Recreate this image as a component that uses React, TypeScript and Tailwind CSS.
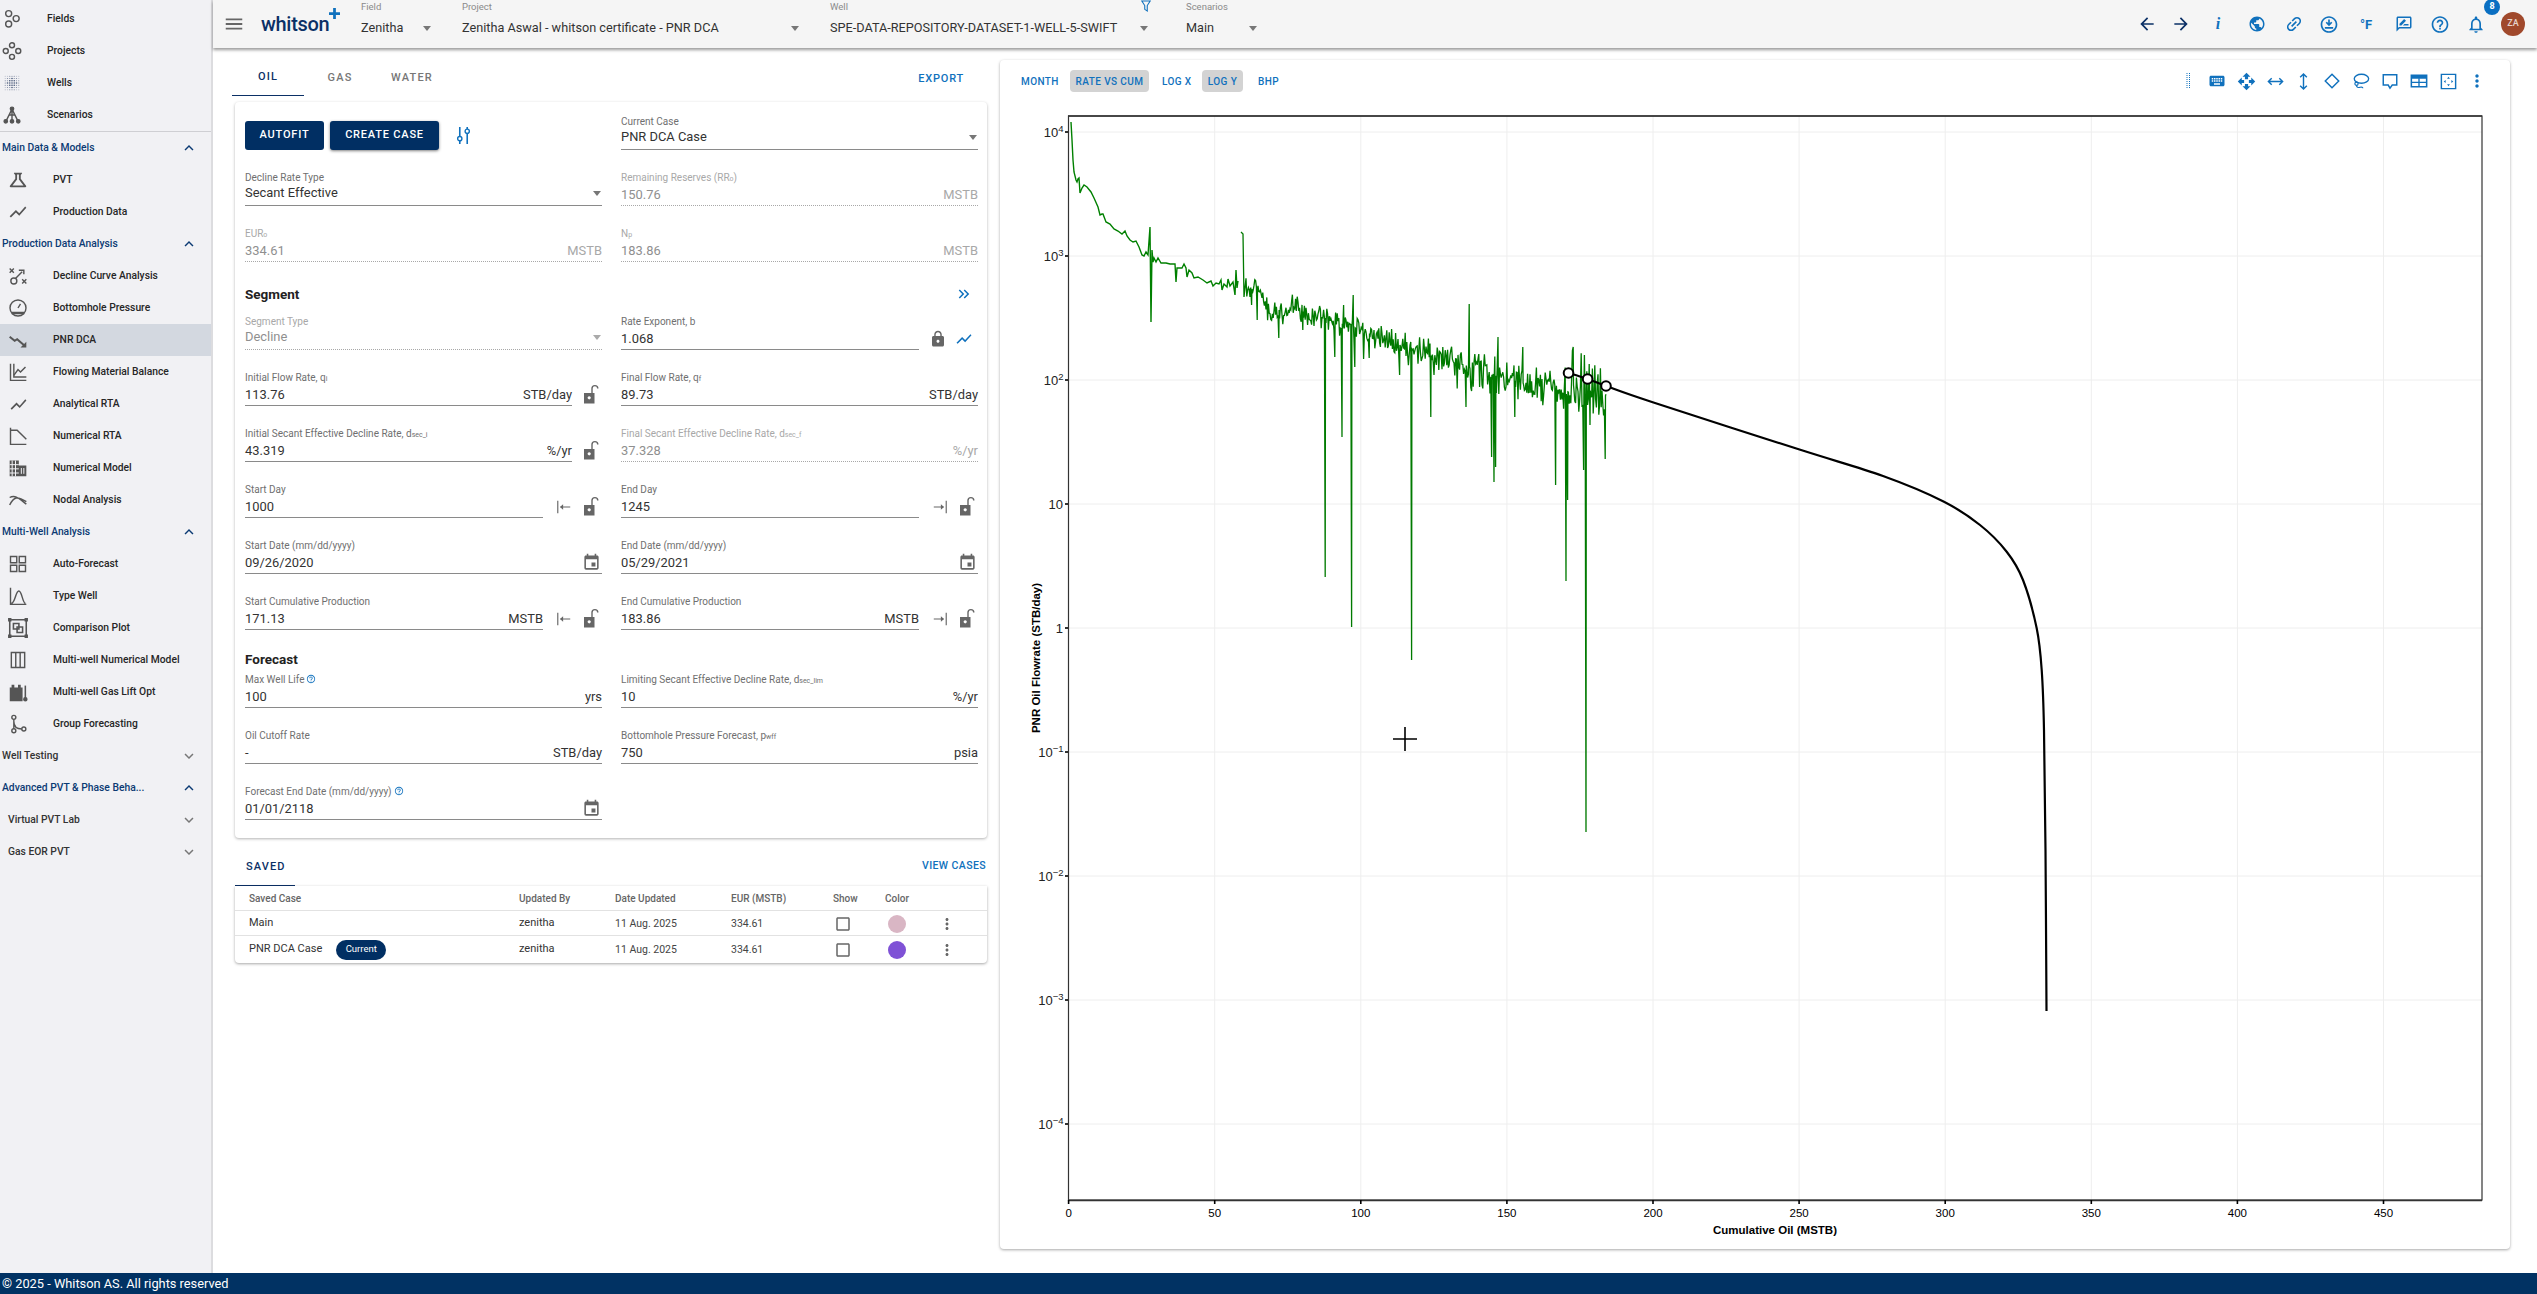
import React, { useMemo } from "react";
import {
  MdMenu, MdArrowBack, MdArrowForward, MdPublic, MdLink, MdOutlineDownloadForOffline, MdOutlineRateReview,
  MdHelpOutline, MdNotificationsNone, MdKeyboard, MdOpenWith, MdMoreVert, MdLock, MdEvent, MdCheckBoxOutlineBlank,
  MdExpandLess, MdExpandMore, MdOutlineScience, MdShowChart, MdKeyboardDoubleArrowRight, MdHelpOutline as MdQ,
} from "react-icons/md";

const I = ({ children, c = "w-[18px] h-[18px]" }: { children: React.ReactNode; c?: string }) => (
  <svg viewBox="0 0 24 24" fill="none" stroke="currentColor" strokeWidth={1.7} className={c}>{children}</svg>
);

const wellsDots: React.ReactNode[] = [];
for (let i = 0; i < 7; i++) for (let j = 0; j < 7; j++) {
  const d = Math.abs(i - 3) + Math.abs(j - 3);
  wellsDots.push(<circle key={i + "-" + j} cx={3 + i * 3} cy={3 + j * 3} r={d < 3 ? 1.1 : 0.8} fill="currentColor" stroke="none" opacity={d < 3 ? 1 : d < 5 ? 0.7 : 0.35} />);
}

const icons: Record<string, React.ReactNode> = {
  fields: <I c="w-[20px] h-[20px]"><circle cx="8" cy="5.5" r="3.6" /><circle cx="8" cy="18" r="3.6" /><circle cx="17" cy="11.5" r="3.6" /></I>,
  projects: <I c="w-[20px] h-[20px]"><circle cx="12" cy="5" r="3" /><circle cx="4.5" cy="12" r="3" /><circle cx="19.5" cy="12" r="3" /><circle cx="12" cy="19" r="3" /></I>,
  wells: <svg viewBox="0 0 24 24" className="w-[18px] h-[18px] text-[#4a5a7a]">{wellsDots}</svg>,
  scenarios: <I c="w-[20px] h-[20px]"><path d="M12 5 5 19M12 5l7 14M12 5v14M8.500 12h7" /><circle cx="12" cy="4.500" r="2" fill="currentColor" /><circle cx="4.500" cy="19.500" r="2" fill="currentColor" /><circle cx="12" cy="19.500" r="2" fill="currentColor" /><circle cx="19.500" cy="19.500" r="2" fill="currentColor" /></I>,
  pvt: <MdOutlineScience className="w-[22px] h-[22px]" />,
  prod: <MdShowChart className="w-[20px] h-[20px]" />,
  dca: <I c="w-[20px] h-[20px]"><path d="M2 3l5 5M7 3 2 8M17 16l5 5M22 16l-5 5" /><circle cx="7" cy="18" r="3.600" /><path d="M9 15l8-8M13 5h6v5" /></I>,
  bhp: <I c="w-[20px] h-[20px]"><circle cx="12" cy="12" r="9.600" /><path d="M12 12l3-5M6 11v.01M12 6v.01M18 11v.01" /><path d="M4.500 18h15" strokeWidth="3" /></I>,
  pnr: <I c="w-[20px] h-[20px]"><path d="M2 8l6 5 3-2 9 8" strokeWidth="2.400" /><path d="M22 14v7h-7z" fill="currentColor" stroke="none" /></I>,
  fmb: <I c="w-[20px] h-[20px]"><path d="M3 2v20h19M7 2v16h15" /><path d="M7 16l5-7 3 3 6-6" /></I>,
  art: <MdShowChart className="w-[19px] h-[19px]" />,
  nrta: <I c="w-[20px] h-[20px]"><path d="M3 2v20h19M3 5h8l11 11" /></I>,
  nmod: <I c="w-[20px] h-[20px]"><path d="M2 3h11v19H2zM13 9h9v13h-9z" fill="currentColor" stroke="none" /><path d="M5 3v19M9 3v19M2 8h11M2 13h11M2 18h11M16 12v7M19 12v7" stroke="#f1f1f4" strokeWidth="1.200" /></I>,
  nodal: <I c="w-[20px] h-[20px]"><path d="M2 18C7 8 11 7 22 14M2 9c7-4 12 2 20 8" /></I>,
  auto: <I c="w-[20px] h-[20px]"><path d="M3 3h7.500v7.500H3zM13.500 3H21v7.500h-7.500zM3 13.500h7.500V21H3zM13.500 13.500H21V21h-7.500z" /></I>,
  type: <I c="w-[20px] h-[20px]"><path d="M3 2v20h19M4 21c5-1 5-15 9-15s4 14 8 15" /></I>,
  comp: <I c="w-[22px] h-[22px]"><path d="M3 3h18v18H3z" /><path d="M7 7h6v6H7zM11 11h6v6h-6z" /><path d="M2 2h2v2H2zM20 2h2v2h-2zM2 20h2v2H2zM20 20h2v2h-2z" fill="currentColor" /></I>,
  mnm: <I c="w-[20px] h-[20px]"><path d="M4 3h16v18H4zM9.300 3v18M14.600 3v18" /></I>,
  gas: <I c="w-[22px] h-[22px]"><path d="M3 7h2V4h3v3h4V4h3v3h2v15H3z" fill="currentColor" stroke="none" /><path d="M20 5v14" /><circle cx="20" cy="20" r="1.600" fill="currentColor" /></I>,
  group: <I c="w-[20px] h-[20px]"><circle cx="7" cy="4" r="2.400" /><circle cx="7" cy="20" r="2.400" /><circle cx="19" cy="18" r="2.400" /><path d="M7 6.500v11M7 9c0 7 4 9 9.600 9" /></I>,
};

type NavT = { t: string; i?: string; k: "top" | "item" | "sec" | "sec2" | "sub"; open?: boolean; active?: boolean };
const nav: NavT[] = [
  { t: "Fields", i: "fields", k: "top" }, { t: "Projects", i: "projects", k: "top" }, { t: "Wells", i: "wells", k: "top" }, { t: "Scenarios", i: "scenarios", k: "top" },
  { t: "Main Data & Models", k: "sec", open: true }, { t: "PVT", i: "pvt", k: "item" }, { t: "Production Data", i: "prod", k: "item" },
  { t: "Production Data Analysis", k: "sec", open: true }, { t: "Decline Curve Analysis", i: "dca", k: "item" }, { t: "Bottomhole Pressure", i: "bhp", k: "item" },
  { t: "PNR DCA", i: "pnr", k: "item", active: true }, { t: "Flowing Material Balance", i: "fmb", k: "item" }, { t: "Analytical RTA", i: "art", k: "item" },
  { t: "Numerical RTA", i: "nrta", k: "item" }, { t: "Numerical Model", i: "nmod", k: "item" }, { t: "Nodal Analysis", i: "nodal", k: "item" },
  { t: "Multi-Well Analysis", k: "sec", open: true }, { t: "Auto-Forecast", i: "auto", k: "item" }, { t: "Type Well", i: "type", k: "item" }, { t: "Comparison Plot", i: "comp", k: "item" },
  { t: "Multi-well Numerical Model", i: "mnm", k: "item" }, { t: "Multi-well Gas Lift Opt", i: "gas", k: "item" }, { t: "Group Forecasting", i: "group", k: "item" },
  { t: "Well Testing", k: "sec2" }, { t: "Advanced PVT & Phase Beha...", k: "sec", open: true }, { t: "Virtual PVT Lab", k: "sub" }, { t: "Gas EOR PVT", k: "sub" },
];

function NavRow({ n }: { n: NavT }) {
  if (n.k === "top" || n.k === "item") {
    return (
      <div className={"flex items-center h-[32px] shrink-0 text-[#262626] " + (n.active ? "bg-[#d3d8e0] " : "") + (n.k === "top" ? "pl-[1px]" : "pl-[7px]")}>
        <span className="flex items-center justify-center w-[22px] mr-[24px] text-[#555]">{icons[n.i!]}</span>
        <span className="text-[10.3px] font-medium whitespace-nowrap">{n.t}</span>
      </div>
    );
  }
  const color = n.k === "sec" ? "text-[#0b3a73]" : "text-[#333]";
  return (
    <div className={"flex items-center h-[32px] shrink-0 pr-[13px] " + (n.k === "sub" ? "pl-[8px]" : "pl-[2px]")}>
      <span className={"flex-1 text-[10.3px] font-medium whitespace-nowrap " + color}>{n.t}</span>
      {n.open ? <MdExpandLess className="w-[18px] h-[18px] text-[#0b3a73]" /> : <MdExpandMore className="w-[18px] h-[18px] text-[#777]" />}
    </div>
  );
}

const Caret = ({ c = "text-[#777]" }: { c?: string }) => (
  <svg viewBox="0 0 8 5" className={"w-[8px] h-[5px] shrink-0 " + c}><path d="M0 0h8L4 5z" fill="currentColor" /></svg>
);

function HSel({ label, value, w, inner }: { label: string; value: string; w: string; inner: string }) {
  return (
    <div className={"shrink-0 h-[48px] " + w}>
      <div className="h-[14px] flex items-center text-[9.5px] text-[#8a8a8a]">{label}</div>
      <div className={"mt-[4px] h-[20px] flex items-center justify-between text-[12.7px] text-[#333] whitespace-nowrap " + inner}>
        <span>{value}</span><Caret />
      </div>
    </div>
  );
}

const Sub = ({ children }: { children: React.ReactNode }) => <sub className="text-[7px] leading-none align-baseline relative top-[2px]">{children}</sub>;

const OpenLock = () => (
  <svg viewBox="0 0 16 20" className="w-[16px] h-[20px] text-[#666]"><path fillRule="evenodd" d="M1 9h10.500v10.500H1zM6.200 12.200a1.600 1.600 0 1 0 .01 0z" fill="currentColor" /><path d="M9 9V4.500a2.900 2.900 0 0 1 5.800 0" fill="none" stroke="currentColor" strokeWidth="1.400" /></svg>
);
const ArrowIn = () => (
  <svg viewBox="0 0 18 18" className="w-[16px] h-[18px] text-[#666]"><path d="M2 2v14M5 9h11" stroke="currentColor" strokeWidth="1.300" fill="none" /><path d="M8 6 4.500 9 8 12z" fill="currentColor" /></svg>
);
const ArrowOut = () => (
  <svg viewBox="0 0 18 18" className="w-[16px] h-[18px] text-[#666]"><path d="M16 2v14M2 9h11" stroke="currentColor" strokeWidth="1.300" fill="none" /><path d="M10 6l3.500 3-3.500 3z" fill="currentColor" /></svg>
);

function Field({ label, value, unit, off, select, adorn, cal }: { label: React.ReactNode; value: string; unit?: string; off?: boolean; select?: boolean; adorn?: React.ReactNode; cal?: boolean }) {
  return (
    <div className="flex items-end h-full min-w-0">
      <div className={"flex-1 min-w-0 " + (off ? "border-b border-dotted border-[#a8a8a8]" : "border-b-[1.5px] border-[#8a8a8a]")}>
        <div className={"h-[13px] flex items-center text-[10px] whitespace-nowrap " + (off ? "text-[#a8a8a8]" : "text-[#6f6f6f]")}>{label}</div>
        <div className={"h-[21px] flex items-center justify-between text-[12.9px] whitespace-nowrap " + (off ? "text-[#8f8f8f] " : "text-[#333] ") + (select ? "pb-[3px]" : "")}>
          <span>{value}</span>
          {unit && <span className={off ? "text-[#a8a8a8]" : "text-[#333]"}>{unit}</span>}
          {select && <span className="pr-[1px] pl-2"><Caret c={off ? "text-[#aaa]" : "text-[#777]"} /></span>}
          {cal && <MdEvent className="w-[19px] h-[19px] text-[#666] mr-[1px]" />}
        </div>
      </div>
      {adorn}
    </div>
  );
}

const LockA = () => <span className="w-[30px] shrink-0 pl-[11px] mb-[2px] flex"><OpenLock /></span>;
const InA = () => <span className="w-[59px] shrink-0 flex items-end mb-[2px]"><span className="w-[42px] flex justify-center"><ArrowIn /></span><span className="-ml-[2px]"><OpenLock /></span></span>;
const OutA = () => <span className="w-[59px] shrink-0 flex items-end mb-[2px]"><span className="w-[42px] flex justify-center"><ArrowOut /></span><span className="-ml-[2px]"><OpenLock /></span></span>;

const Help = () => <MdQ className="inline-block w-[10px] h-[10px] text-[#1976c0] ml-[2px] -mt-[1px]" />;

function Chart() {
  const { green1, green2, black } = useMemo(() => {
    let s = 12345;
    const rnd = () => { s = (s * 1664525 + 1013904223) >>> 0; return s / 4294967296; };
    const e: number[][] = [[1071,122],[1072,140],[1073,160],[1074,172],[1076,180],[1077,182],[1078,179],[1079,178],[1080,193],[1082,188],[1084,185],[1087,187],[1091,192],[1094,198],[1098,207],[1100,215],[1102,214],[1103,214],[1106,222],[1110,224],[1114,229],[1118,231],[1122,234],[1125,231],[1127,236],[1130,240],[1133,242],[1136,241],[1139,247],[1142,255],[1144,256],[1146,252],[1148,255],[1150,227],[1151,322],[1152,250],[1153,262],[1154,258],[1156,262],[1158,258],[1161,263],[1166,263],[1170,264],[1175,264],[1176,282],[1177,268],[1182,268],[1184,264],[1186,268],[1187,277],[1189,270],[1192,273],[1194,278],[1198,277],[1203,280],[1207,283],[1211,281],[1213,286],[1216,283],[1219,284],[1221,280],[1222,290],[1224,284],[1227,287],[1228,279],[1230,286],[1233,282],[1235,295],[1236,270],[1237,288],[1238,281]];
    const base = [[1246,290],[1260,288],[1267,310],[1298,310],[1325,318],[1355,328],[1394,343],[1432,356],[1462,364],[1489,374],[1527,384],[1566,394],[1573,385],[1606,396]];
    const spikes: Record<number, number> = { 1325: 577, 1352: 627, 1412: 660, 1335: 357, 1342: 437, 1355: 367, 1369: 358, 1400: 375, 1431: 417, 1466: 407, 1492: 457, 1494: 482, 1496: 467, 1515: 417, 1556: 485, 1566: 581, 1568: 500, 1584: 470, 1586: 832, 1605: 459, 1590: 425, 1344: 305, 1353: 295, 1469: 304, 1498: 337, 1523: 347, 1573: 347, 1250: 297, 1252: 305, 1257: 320, 1303: 330, 1279: 338 };
    const used = new Set<number>();
    const pts: number[][] = [[1241, 232], [1243, 234], [1244, 297]];
    for (let x = 1246; x <= 1606; x += 0.8) {
      let k = 0; while (k < base.length - 2 && base[k + 1][0] < x) k++;
      const [x0, y0] = base[k], [x1, y1] = base[k + 1];
      const b = y0 + ((y1 - y0) * (x - x0)) / (x1 - x0);
      const amp = x < 1265 ? 12 : x < 1400 ? 17 : x < 1565 ? 21 : 40;
      const kx = Math.round(x);
      if (spikes[kx] && !used.has(kx)) { used.add(kx); pts.push([x, spikes[kx]]); pts.push([x + 0.3, b]); continue; }
      let n = (rnd() + rnd() - 1) * amp;
      if (rnd() < 0.06) n += (rnd() - 0.25) * 26;
      pts.push([x, b + n]);
    }
    const p = [[1568.5,373],[1587.6,379],[1606,386],[1652.7,402.3],[1798.7,449.3],[1883,476],[1944,501.7],[1980,525],[2006.7,551.7],[2023,580],[2036.7,628.3],[2041.7,670],[2044,730],[2045.5,850],[2046.5,1011]];
    let d = `M${p[0][0]} ${p[0][1]}`;
    for (let i = 0; i < p.length - 1; i++) {
      const a = p[Math.max(i - 1, 0)], b = p[i], c = p[i + 1], f = p[Math.min(i + 2, p.length - 1)];
      const t = (q: number, r: number, u: number) => q + (r - u) / 6;
      d += `C${t(b[0], c[0], a[0]).toFixed(1)} ${t(b[1], c[1], a[1]).toFixed(1)} ${t(c[0], b[0], f[0]).toFixed(1)} ${t(c[1], b[1], f[1]).toFixed(1)} ${c[0]} ${c[1]}`;
    }
    const fmt = (a: number[][]) => a.map((q) => q[0].toFixed(1) + "," + q[1].toFixed(1)).join(" ");
    return { green1: fmt(e), green2: fmt(pts), black: d };
  }, []);
  const xs = [0, 50, 100, 150, 200, 250, 300, 350, 400, 450];
  const X = (v: number) => 1068.6 + 2.922 * v;
  const ys = [["4", 132], ["3", 256], ["2", 380], ["", 504], ["", 628], ["\u22121", 752], ["\u22122", 876], ["\u22123", 1000], ["\u22124", 1124]] as [string, number][];
  return (
    <svg viewBox="1000 100 1510 1149" className="block w-[1510px] h-[1149px] font-['Liberation_Sans',Arial,sans-serif]">
      {xs.slice(1).map((v) => <line key={v} x1={X(v)} x2={X(v)} y1={116} y2={1200} stroke="#eeeeee" strokeWidth="1" />)}
      {ys.map(([, y]) => <line key={y} x1={1068} x2={2482} y1={y} y2={y} stroke="#eeeeee" strokeWidth="1" />)}
      <polyline points={green1} fill="none" stroke="#008000" strokeWidth="1.4" />
      <polyline points={green2} fill="none" stroke="#007a00" strokeWidth="1.3" />
      <path d={black} fill="none" stroke="#000" strokeWidth="2.2" />
      {[[1568.5, 373], [1587.6, 379], [1606, 386]].map(([x, y]) => <circle key={x} cx={x} cy={y} r="4.8" fill="#fff" stroke="#000" strokeWidth="2" />)}
      <rect x="1068.5" y="116" width="1413.5" height="1084" fill="none" stroke="#333" strokeWidth="1.2" />
      <line x1="1068" x2="2482" y1="116" y2="116" stroke="#333" strokeWidth="1.5" />
      <line x1="1068" x2="2482" y1="1200.5" y2="1200.5" stroke="#333" strokeWidth="1.5" />
      {xs.map((v) => (
        <g key={v}>
          <line x1={X(v)} x2={X(v)} y1={1200} y2={1204} stroke="#000" strokeWidth="1.6" />
          <text x={X(v)} y={1217} textAnchor="middle" fontSize="11.5" fill="#000" className="font-medium">{v}</text>
        </g>
      ))}
      {ys.map(([e, y], i) => (
        <g key={y}>
          <line x1={1065} x2={1068} y1={y} y2={y} stroke="#000" strokeWidth="1.6" />
          {i === 4 ? <text x={1063} y={y + 5} textAnchor="end" fontSize="13" fill="#222">1</text> : e ? (
            <text x={1063.5} y={y + 5} textAnchor="end" fontSize="13" fill="#222">10<tspan dy="-5" fontSize="9.5">{e}</tspan></text>
          ) : <text x={1063} y={y + 5} textAnchor="end" fontSize="13" fill="#222">10</text>}
        </g>
      ))}
      <text transform="translate(1039.5 658) rotate(-90)" textAnchor="middle" fontSize="11.5" fontWeight="700" fill="#000">PNR Oil Flowrate (STB/day)</text>
      <text x="1775" y="1234" textAnchor="middle" fontSize="11.5" fontWeight="700" fill="#000">Cumulative Oil (MSTB)</text>
      <path d="M1405 727v24M1393 739h24" stroke="#000" strokeWidth="1.6" fill="none" />
    </svg>
  );
}

const TB = ({ children, c }: { children: React.ReactNode; c: string }) => (
  <span className={"text-[#1071bd] flex justify-center shrink-0 " + c}>{children}</span>
);
const Hi = "w-[18px] h-[18px]";

export default function App() {
  return (
    <div className="w-[2537px] h-[1294px] flex flex-col overflow-hidden bg-white font-[Roboto,sans-serif] text-[#333]">
      <div className="flex flex-1 min-h-0">
        <aside className="w-[213px] shrink-0 bg-[#f1f1f4] border-r-2 border-[#dcdcdf] flex flex-col pt-[3px]">
          {nav.slice(0, 4).map((n) => <NavRow key={n.t} n={n} />)}
          <div className="h-[1px] bg-[#cfcfd3] shrink-0" />
          {nav.slice(4).map((n) => <NavRow key={n.t} n={n} />)}
        </aside>
        <div className="flex-1 min-w-0 flex flex-col">
          <header className="h-[48px] shrink-0 bg-[#f5f5f5] shadow-[0_2px_3px_rgba(0,0,0,0.4)] flex relative z-10 pl-[10px] pr-[12px]">
            <div className="w-[24px] shrink-0 flex items-center"><MdMenu className="w-[22px] h-[22px] text-[#666]" /></div>
            <div className="relative w-[100px] ml-[14px] shrink-0">
              <span className="absolute left-0 top-[9px] text-[20px] leading-[30px] font-medium text-[#0b3066] tracking-[-0.3px]">whitson</span>
              <svg viewBox="0 0 12 12" className="absolute left-[68px] top-[8px] w-[11px] h-[11px] text-[#1071bd]"><path d="M6 0v12M0 6h12" stroke="currentColor" strokeWidth="3" /></svg>
            </div>
            <HSel label="Field" value="Zenitha" w="w-[101px]" inner="w-[70px]" />
            <HSel label="Project" value="Zenitha Aswal - whitson certificate - PNR DCA" w="w-[368px]" inner="w-[337px]" />
            <div className="relative">
              <HSel label="Well" value="SPE-DATA-REPOSITORY-DATASET-1-WELL-5-SWIFT" w="w-[356px]" inner="w-[318px]" />
              <svg viewBox="0 0 12 14" className="absolute left-[311px] top-0 w-[10px] h-[12px] text-[#1071bd]"><path d="M1 1h10L7.500 6.500V13L4.500 11V6.500z" fill="none" stroke="currentColor" strokeWidth="1.300" /></svg>
            </div>
            <HSel label="Scenarios" value="Main" w="w-[76px]" inner="w-[71px]" />
            <div className="flex-1 flex items-center justify-end">
              <TB c="w-[22px]"><MdArrowBack className="w-[20px] h-[20px] text-[#0b3066]" /></TB>
              <TB c="w-[22px] ml-[12px]"><MdArrowForward className="w-[20px] h-[20px] text-[#0b3066]" /></TB>
              <TB c="w-[20px] ml-[16px]"><span className="font-['Liberation_Serif',serif] italic font-bold text-[16px] leading-none">i</span></TB>
              <TB c="w-[20px] ml-[19px]"><MdPublic className={Hi} /></TB>
              <TB c="w-[20px] ml-[17px]"><MdLink className="w-[20px] h-[20px] -rotate-45" /></TB>
              <TB c="w-[20px] ml-[15px]"><MdOutlineDownloadForOffline className="w-[21px] h-[21px]" /></TB>
              <TB c="w-[20px] ml-[17px]"><span className="font-bold text-[13px] leading-none">°F</span></TB>
              <TB c="w-[20px] ml-[18px]"><MdOutlineRateReview className={Hi} /></TB>
              <TB c="w-[20px] ml-[16px]"><MdHelpOutline className="w-[21px] h-[21px]" /></TB>
              <TB c="w-[20px] ml-[16px] relative">
                <MdNotificationsNone className="w-[23px] h-[23px]" />
                <span className="absolute left-[18px] -top-[14px] w-[16px] h-[16px] rounded-full bg-[#0a6fc2] text-white text-[9px] font-bold flex items-center justify-center">8</span>
              </TB>
              <div className="w-[24px] h-[24px] ml-[15px] rounded-full bg-[#a0492c] text-[#e8d5cc] text-[9px] font-medium flex items-center justify-center shrink-0 relative">ZA</div>
            </div>
          </header>
          <div className="flex-1 min-h-0 flex">
            <div className="w-[752px] ml-[22px] shrink-0 flex flex-col">
              <div className="h-[48px] flex shrink-0 items-start -ml-[3px] pr-[2px]">
                <div className="w-[72px] h-[48px] border-b-[1.5px] border-[#0b3066] flex items-center justify-center pt-[12px] text-[11px] font-medium tracking-[1.2px] text-[#0b3066]">OIL</div>
                <div className="w-[72px] h-[48px] flex items-center justify-center pt-[12px] text-[11px] font-medium tracking-[1.2px] text-[#777]">GAS</div>
                <div className="w-[72px] h-[48px] flex items-center justify-center pt-[12px] text-[11px] font-medium tracking-[1.2px] text-[#777]">WATER</div>
                <div className="flex-1 h-[48px] flex items-center justify-end pt-[14px] pr-[21px] text-[11px] font-medium tracking-[0.8px] text-[#1071bd]">EXPORT</div>
              </div>
              <section className="mt-[6px] rounded-[4px] bg-white shadow-[0_1px_3px_rgba(0,0,0,0.3)] pl-[10px] pr-[9px] pb-[18px] shrink-0">
                <div className="grid grid-cols-2 gap-x-[19px] grid-rows-[48px_56px_56px]">
                  <div className="flex items-center pt-[18px] gap-[6px]">
                    <button className="h-[29px] w-[79px] rounded-[3px] bg-[#012f63] text-white text-[11px] font-medium tracking-[0.8px]">AUTOFIT</button>
                    <button className="h-[29px] w-[109px] rounded-[3px] bg-[#012f63] text-white text-[11px] font-medium tracking-[0.8px] shadow-[0_1px_3px_rgba(0,0,0,0.5)]">CREATE CASE</button>
                    <svg viewBox="0 0 14 16" className="ml-[11px] w-[15px] h-[17px] text-[#1071bd]"><path d="M3.500 0v9M3.500 13v3M10.500 0v2M10.500 6v10" stroke="currentColor" strokeWidth="1.500" fill="none" /><circle cx="3.500" cy="11" r="2" fill="none" stroke="currentColor" strokeWidth="1.300" /><circle cx="10.500" cy="4" r="2" fill="none" stroke="currentColor" strokeWidth="1.300" /></svg>
                  </div>
                  <Field label="Current Case" value="PNR DCA Case" select />
                  <Field label="Decline Rate Type" value="Secant Effective" select />
                  <Field off label={<>Remaining Reserves (RR<Sub>o</Sub>)</>} value="150.76" unit="MSTB" />
                  <Field off label={<>EUR<Sub>o</Sub></>} value="334.61" unit="MSTB" />
                  <Field off label={<>N<Sub>p</Sub></>} value="183.86" unit="MSTB" />
                </div>
                <div className="mt-[20px] h-[24px] flex items-center justify-between text-[13.5px] font-bold text-[#222]">
                  <span>Segment</span>
                  <MdKeyboardDoubleArrowRight className="w-[18px] h-[18px] text-[#1071bd] mr-[5px]" />
                </div>
                <div className="grid grid-cols-2 gap-x-[19px] grid-rows-[44px_repeat(5,56px)]">
                  <Field off select label="Segment Type" value="Decline" />
                  <Field label="Rate Exponent, b" value="1.068" adorn={
                    <span className="w-[59px] shrink-0 flex items-center mb-[2px] text-[#666]"><MdLock className="ml-[10px] w-[18px] h-[18px]" /><MdShowChart className="ml-[8px] w-[18px] h-[18px] text-[#1071bd]" /></span>
                  } />
                  <Field label={<>Initial Flow Rate, q<Sub>i</Sub></>} value="113.76" unit="STB/day" adorn={<LockA />} />
                  <Field label={<>Final Flow Rate, q<Sub>f</Sub></>} value="89.73" unit="STB/day" />
                  <Field label={<>Initial Secant Effective Decline Rate, d<Sub>sec_i</Sub></>} value="43.319" unit="%/yr" adorn={<LockA />} />
                  <Field off label={<>Final Secant Effective Decline Rate, d<Sub>sec_f</Sub></>} value="37.328" unit="%/yr" />
                  <Field label="Start Day" value="1000" adorn={<InA />} />
                  <Field label="End Day" value="1245" adorn={<OutA />} />
                  <Field label="Start Date (mm/dd/yyyy)" value="09/26/2020" cal />
                  <Field label="End Date (mm/dd/yyyy)" value="05/29/2021" cal />
                  <Field label="Start Cumulative Production" value="171.13" unit="MSTB" adorn={<InA />} />
                  <Field label="End Cumulative Production" value="183.86" unit="MSTB" adorn={<OutA />} />
                </div>
                <div className="mt-[17px] h-[24px] flex items-center text-[13.5px] font-bold text-[#222]">Forecast</div>
                <div className="grid grid-cols-2 gap-x-[19px] grid-rows-[37px_56px_56px]">
                  <Field label={<>Max Well Life<Help /></>} value="100" unit="yrs" />
                  <Field label={<>Limiting Secant Effective Decline Rate, d<Sub>sec_lim</Sub></>} value="10" unit="%/yr" />
                  <Field label="Oil Cutoff Rate" value="-" unit="STB/day" />
                  <Field label={<>Bottomhole Pressure Forecast, p<Sub>wff</Sub></>} value="750" unit="psia" />
                  <Field label={<>Forecast End Date (mm/dd/yyyy)<Help /></>} value="01/01/2118" cal />
                  <div />
                </div>
              </section>
              <div className="h-[48px] shrink-0 flex">
                <div className="w-[60px] border-b-[1.5px] border-[#0b3066] pt-[21px] pl-[11px] text-[11px] leading-[16px] font-medium tracking-[1.1px] text-[#0b3066]">SAVED</div>
                <div className="flex-1 text-right pt-[20px] pr-[1px] text-[10.5px] leading-[16px] font-medium tracking-[0.4px] text-[#1071bd]">VIEW CASES</div>
              </div>
              <div className="rounded-b-[4px] bg-white shadow-[0_1px_3px_rgba(0,0,0,0.35)] shrink-0 text-[10.5px]">
                <div className="grid grid-cols-[284px_96px_116px_102px_52px_62px_40px] h-[25px] items-center pl-[14px] border-b border-[#e2e2e2] text-[#666] font-medium text-[10px]">
                  <span>Saved Case</span><span className="-ml-[14px]">Updated By</span><span className="-ml-[14px]">Date Updated</span><span className="-ml-[14px]">EUR (MSTB)</span><span className="-ml-[14px]">Show</span><span className="-ml-[14px]">Color</span><span />
                </div>
                <div className="grid grid-cols-[284px_96px_116px_102px_52px_62px_40px] h-[25px] items-center pl-[14px] pt-[1px] border-b border-[#e2e2e2]">
                  <span className="text-[11px]">Main</span><span className="-ml-[14px] text-[11px]">zenitha</span><span className="-ml-[14px] text-[#444]">11 Aug. 2025</span><span className="-ml-[14px] text-[#444]">334.61</span>
                  <MdCheckBoxOutlineBlank className="-ml-[13px] w-[18px] h-[18px] text-[#666]" />
                  <span className="-ml-[11px] w-[18px] h-[18px] rounded-full bg-[#d9b6c4]" />
                  <MdMoreVert className="-ml-[23px] w-[18px] h-[18px] text-[#666]" />
                </div>
                <div className="grid grid-cols-[284px_96px_116px_102px_52px_62px_40px] h-[27px] items-center pl-[14px]">
                  <span className="flex items-center text-[11px]">PNR DCA Case<span className="ml-[14px] w-[50px] h-[20px] rounded-full bg-[#012f63] text-white text-[9.5px] flex items-center justify-center">Current</span></span>
                  <span className="-ml-[14px] text-[11px]">zenitha</span><span className="-ml-[14px] text-[#444]">11 Aug. 2025</span><span className="-ml-[14px] text-[#444]">334.61</span>
                  <MdCheckBoxOutlineBlank className="-ml-[13px] w-[18px] h-[18px] text-[#666]" />
                  <span className="-ml-[11px] w-[18px] h-[18px] rounded-full bg-[#7f52d6]" />
                  <MdMoreVert className="-ml-[23px] w-[18px] h-[18px] text-[#666]" />
                </div>
              </div>
            </div>
            <section className="ml-[13px] mt-[12px] w-[1510px] h-[1189px] shrink-0 rounded-[4px] bg-white shadow-[0_1px_3px_rgba(0,0,0,0.35)]">
              <div className="h-[40px] flex items-center pt-[2px] pl-[21px] text-[10px] font-medium tracking-[0.4px] text-[#1071bd] whitespace-nowrap">
                <span className="w-[39px]">MONTH</span>
                <span className="ml-[10px] w-[79px] h-[22px] rounded-[4px] bg-[#d3d3d3] flex items-center justify-center">RATE VS CUM</span>
                <span className="ml-[13px] w-[27px]">LOG X</span>
                <span className="ml-[13px] w-[41px] h-[22px] rounded-[4px] bg-[#d3d3d3] flex items-center justify-center">LOG Y</span>
                <span className="ml-[15px] w-[24px]">BHP</span>
                <div className="flex-1 flex items-center justify-end pr-[23px]">
                  <svg viewBox="0 0 6 16" className="w-[6px] h-[16px] text-[#1071bd]">{[0, 1, 2, 3, 4, 5, 6, 7].map((i) => <g key={i}><rect x="0.500" y={i * 2} width="1" height="1" fill="currentColor" /><rect x="3" y={i * 2} width="1" height="1" fill="currentColor" /></g>)}</svg>
                  <TB c="w-[20px] ml-[15px]"><MdKeyboard className={Hi} /></TB>
                  <TB c="w-[20px] ml-[9px]"><MdOpenWith className="w-[19px] h-[19px]" /></TB>
                  <TB c="w-[20px] ml-[9px]"><svg viewBox="0 0 20 20" className="w-[19px] h-[19px]"><path d="M2.500 10h15M6 6.500 2.500 10 6 13.500M14 6.500l3.500 3.500-3.500 3.500" fill="none" stroke="currentColor" strokeWidth="1.500" /></svg></TB>
                  <TB c="w-[20px] ml-[8px]"><svg viewBox="0 0 20 20" className="w-[19px] h-[19px]"><path d="M10 2v16M6.500 5.500 10 2l3.500 3.500M6.500 14.500 10 18l3.500-3.500" fill="none" stroke="currentColor" strokeWidth="1.500" /></svg></TB>
                  <TB c="w-[20px] ml-[9px]"><svg viewBox="0 0 20 20" className="w-[18px] h-[18px]"><path d="M10 2.500 17.500 10 10 17.500 2.500 10z" fill="none" stroke="currentColor" strokeWidth="1.600" /></svg></TB>
                  <TB c="w-[20px] ml-[9px]"><svg viewBox="0 0 20 20" className="w-[18px] h-[18px]"><ellipse cx="10.500" cy="7.500" rx="8" ry="5" fill="none" stroke="currentColor" strokeWidth="1.500" /><circle cx="5" cy="13" r="1.800" fill="none" stroke="currentColor" strokeWidth="1.300" /><path d="M5 15c0 2 2 2.500 4 2s3 0 3 1" fill="none" stroke="currentColor" strokeWidth="1.300" /></svg></TB>
                  <TB c="w-[20px] ml-[9px]"><svg viewBox="0 0 20 20" className="w-[18px] h-[18px]"><path d="M2.500 3h15v11.500h-5L10 18l-2-3.500H2.500z" fill="none" stroke="currentColor" strokeWidth="1.600" /></svg></TB>
                  <TB c="w-[20px] ml-[9px]"><svg viewBox="0 0 20 20" className="w-[18px] h-[18px]"><path d="M1.500 3.500h17v13h-17z" fill="none" stroke="currentColor" strokeWidth="1.700" /><path d="M1.500 3.500h17v4h-17z" fill="currentColor" /><path d="M10 7v9M1.500 11.500h17" fill="none" stroke="currentColor" strokeWidth="1.500" /></svg></TB>
                  <TB c="w-[20px] ml-[9px]"><svg viewBox="0 0 20 20" className="w-[19px] h-[19px]"><path d="M2.500 2.500h15v15h-15z" fill="none" stroke="currentColor" strokeWidth="1.500" /><path d="M10 5 8.500 7h3zM10 15l-1.500-2h3zM5 10l2-1.500v3zM15 10l-2-1.500v3z" fill="currentColor" /></svg></TB>
                  <TB c="w-[20px] ml-[9px]"><MdMoreVert className="w-[20px] h-[20px]" /></TB>
                </div>
              </div>
              <Chart />
            </section>
          </div>
        </div>
      </div>
      <footer className="h-[21px] shrink-0 bg-[#013263] text-white text-[12.8px] flex items-center pl-[2px]">© 2025 - Whitson AS. All rights reserved</footer>
    </div>
  );
}
